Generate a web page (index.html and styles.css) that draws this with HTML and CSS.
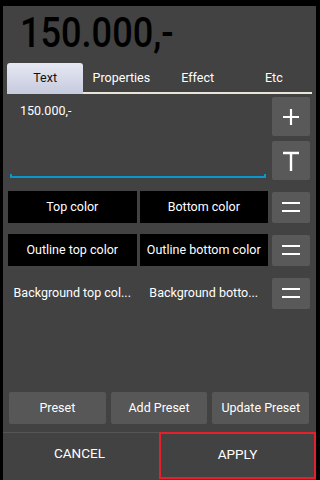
FILE: index.html
```
<!DOCTYPE html>
<html lang="en">
<head>
    <meta charset="UTF-8">
    <meta name="viewport" content="width=device-width, initial-scale=1.0">
    <title>Text editor</title>
    <link rel="stylesheet" href="styles.css">
</head>
<body>

    <div class="dialog">
        <div class="preview"><span class="preview-text">150.000,-</span></div>

        <div class="tabs">
            <div class="tab active">Text</div>
            <div class="tab">Properties</div>
            <div class="tab">Effect</div>
            <div class="tab">Etc</div>
        </div>

        <div class="editor">
            <div class="field">
                <div class="field-text">150.000,-</div>
                <div class="field-line"></div>
            </div>
            <div class="side">
                <div class="icon-btn big">
                    <svg width="20" height="20" viewBox="0 0 20 20"><path d="M10 2v16M2 10h16" stroke="#fff" stroke-width="2.2" fill="none"/></svg>
                </div>
                <div class="icon-btn big">
                    <svg width="20" height="22" viewBox="0 0 20 22"><path d="M2 3h16M10 3v18" stroke="#fff" stroke-width="2.4" fill="none"/></svg>
                </div>
            </div>
        </div>

        <div class="row">
            <div class="cell dark">Top color</div>
            <div class="cell dark">Bottom color</div>
            <div class="icon-btn"><svg width="20" height="14" viewBox="0 0 20 14"><path d="M1 3h18M1 11h18" stroke="#fff" stroke-width="2.2"/></svg></div>
        </div>
        <div class="row">
            <div class="cell dark">Outline top color</div>
            <div class="cell dark">Outline bottom color</div>
            <div class="icon-btn"><svg width="20" height="14" viewBox="0 0 20 14"><path d="M1 3h18M1 11h18" stroke="#fff" stroke-width="2.2"/></svg></div>
        </div>
        <div class="row">
            <div class="cell">Background top col...</div>
            <div class="cell">Background botto...</div>
            <div class="icon-btn"><svg width="20" height="14" viewBox="0 0 20 14"><path d="M1 3h18M1 11h18" stroke="#fff" stroke-width="2.2"/></svg></div>
        </div>

        <div class="spacer"></div>

        <div class="presets">
            <div class="preset">Preset</div>
            <div class="preset">Add Preset</div>
            <div class="preset">Update Preset</div>
        </div>

        <div class="actions">
            <div class="action">CANCEL</div>
            <div class="action apply">APPLY</div>
        </div>
    </div>

</body>
</html>
```

FILE: styles.css
```
body {
    margin: 0;
    background: #000;
    font-family: Roboto, "Liberation Sans", sans-serif;
    color: #fff;
}
.dialog {
    margin: 6px 4px 0 3px;
    height: 474px;
    background: #424242;
    display: flex;
    flex-direction: column;
}
.preview {
    height: 57px;
    padding-left: 17px;
    font-size: 42px;
    line-height: 54px;
    color: #000;
    font-weight: 500;
}
.preview-text {
    display: inline-block;
    transform: scaleX(0.86);
    transform-origin: left center;
}
.tabs {
    display: flex;
    margin: 0 4px;
    height: 29px;
    border-bottom: 2px solid #e9e5d8;
}
.tab {
    flex: 1;
    text-align: center;
    font-size: 12.5px;
    line-height: 30px;
}
.tab.active {
    background: linear-gradient(#e6e8f2, #c5cade);
    color: #111;
    border-radius: 3px 3px 0 0;
    margin-bottom: -2px;
}
.editor {
    display: flex;
    margin: 3px 6px 0 7px;
    gap: 6px;
}
.field {
    flex: 1;
    height: 83px;
    display: flex;
    flex-direction: column;
    justify-content: space-between;
}
.field-text {
    padding: 6px 0 0 10px;
    font-size: 12.5px;
}
.field-line {
    height: 2px;
    border: 2px solid #0a98cb;
    border-top: none;
    margin-bottom: 2px;
}
.side {
    display: flex;
    flex-direction: column;
    gap: 5px;
}
.icon-btn {
    width: 38px;
    height: 31px;
    background: #595959;
    border-radius: 2px;
    display: flex;
    align-items: center;
    justify-content: center;
}
.icon-btn.big {
    height: 39px;
}
.row {
    display: flex;
    align-items: center;
    gap: 3px;
    margin: 11px 6px 0 5px;
    height: 32px;
}
.row + .row {
    margin-top: 11px;
}
.cell {
    flex: 1;
    height: 32px;
    line-height: 32px;
    text-align: center;
    font-size: 12.5px;
    white-space: nowrap;
}
.cell.dark {
    background: #000;
}
.row .icon-btn {
    margin-left: 1px;
}
.spacer {
    flex: 1;
}
.presets {
    display: flex;
    gap: 5px;
    margin: 0 7px 0 6px;
}
.preset {
    flex: 1;
    height: 32px;
    line-height: 32px;
    background: #575757;
    border-radius: 2px;
    text-align: center;
    font-size: 12.5px;
}
.actions {
    display: flex;
    margin-top: 8px;
    border-top: 1px solid #555;
    height: 47px;
}
.action {
    flex: 1;
    text-align: center;
    line-height: 41px;
    font-size: 13.5px;
}
.action.apply {
    border: 2px solid #e3202c;
    margin-left: 3px;
    margin-top: -1px;
    height: 43px;
}
```
